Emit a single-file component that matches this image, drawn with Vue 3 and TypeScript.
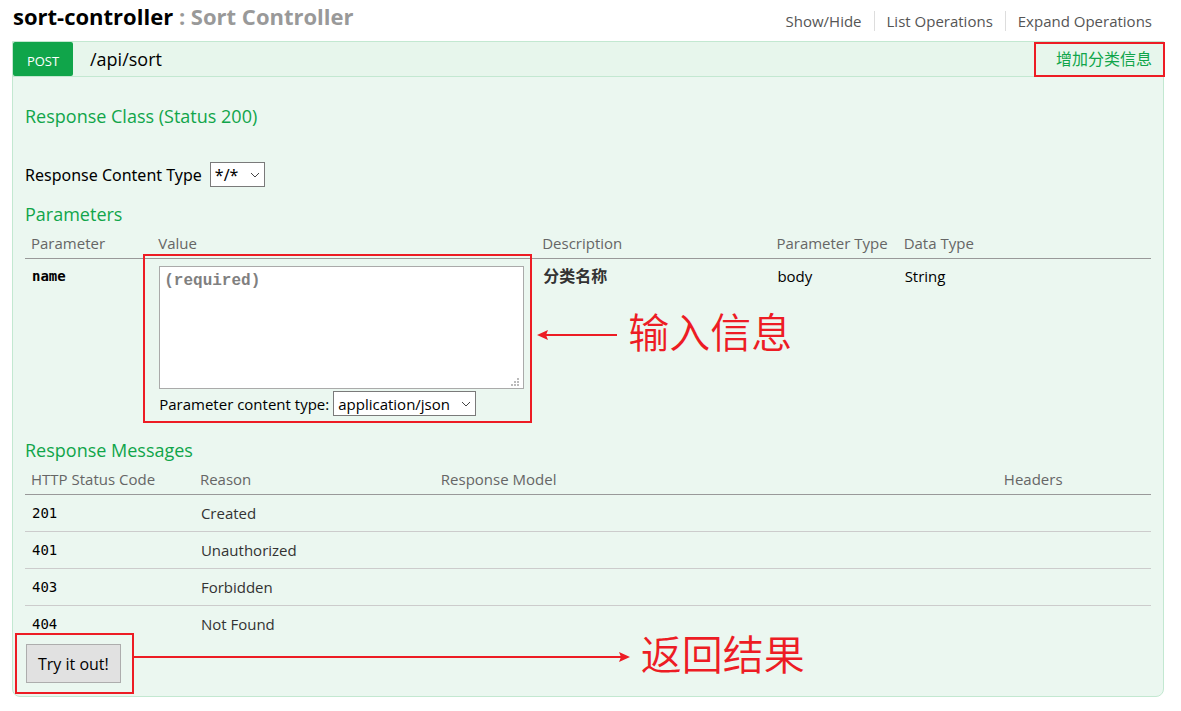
<script setup lang="ts">
import { ref } from 'vue'

interface ResponseMessage {
  code: number
  reason: string
}

const operations: string[] = ['Show/Hide', 'List Operations', 'Expand Operations']

const messages: ResponseMessage[] = [
  { code: 201, reason: 'Created' },
  { code: 401, reason: 'Unauthorized' },
  { code: 403, reason: 'Forbidden' },
  { code: 404, reason: 'Not Found' },
]

const body = ref('')
const responseType = ref('*/*')
const contentType = ref('application/json')
</script>

<template>
  <main class="page">
    <header class="resource">
      <h2 class="title">
        <a href="#sort-controller">sort-controller</a> <span>: Sort Controller</span>
      </h2>
      <ul class="options">
        <li v-for="item in operations" :key="item">
          <a href="#sort-controller">{{ item }}</a>
        </li>
      </ul>
    </header>

    <section class="operation">
      <div class="heading">
        <a class="method" href="#post">POST</a>
        <a class="path" href="#post">/api/sort</a>
        <div class="summary">
          <a href="#post">增加分类信息</a>
        </div>
      </div>

      <form class="content" @submit.prevent>
        <h4>Response Class (Status 200)</h4>

        <div class="response-type">
          <label for="response-type">Response Content Type</label>
          <span class="select">
            <select id="response-type" v-model="responseType" class="narrow">
              <option>*/*</option>
            </select>
            <svg class="chevron" viewBox="0 0 10 6" aria-hidden="true">
              <path d="M1 1l4 4 4-4" />
            </svg>
          </span>
        </div>

        <h4 class="spaced">Parameters</h4>
        <table class="parameters">
          <thead>
            <tr>
              <th class="p-name">Parameter</th>
              <th class="p-value">Value</th>
              <th class="p-desc">Description</th>
              <th class="p-type">Parameter Type</th>
              <th class="p-data">Data Type</th>
            </tr>
          </thead>
          <tbody>
            <tr>
              <td class="code required"><label for="body">name</label></td>
              <td>
                <div class="value">
                  <div class="editor">
                    <textarea id="body" v-model="body" placeholder="(required)"></textarea>
                    <svg class="grip" viewBox="0 0 8 8" aria-hidden="true">
                      <path d="M6 0h2v2H6zM3 3h2v2H3zM6 3h2v2H6zM0 6h2v2H0zM3 6h2v2H3zM6 6h2v2H6z" />
                    </svg>
                  </div>
                  <div class="body-type">
                    <label for="content-type">Parameter content type:</label>
                    <span class="select">
                      <select id="content-type" v-model="contentType" class="wide">
                        <option>application/json</option>
                      </select>
                      <svg class="chevron" viewBox="0 0 10 6" aria-hidden="true">
                        <path d="M1 1l4 4 4-4" />
                      </svg>
                    </span>
                  </div>
                  <div class="frame frame-value"></div>
                  <div class="note note-value">
                    <svg class="arrow-left" viewBox="0 0 80 12" aria-hidden="true">
                      <path class="shaft" d="M6 6h74" />
                      <path class="tip" d="M0 6l11-5-2 5 2 5z" />
                    </svg>
                    <span>输入信息</span>
                  </div>
                </div>
              </td>
              <td class="description">分类名称</td>
              <td>body</td>
              <td>String</td>
            </tr>
          </tbody>
        </table>

        <h4 class="spaced">Response Messages</h4>
        <table class="messages">
          <thead>
            <tr>
              <th class="m-code">HTTP Status Code</th>
              <th class="m-reason">Reason</th>
              <th class="m-model">Response Model</th>
              <th class="m-headers">Headers</th>
            </tr>
          </thead>
          <tbody>
            <tr v-for="message in messages" :key="message.code">
              <td class="code">{{ message.code }}</td>
              <td class="reason">{{ message.reason }}</td>
              <td></td>
              <td></td>
            </tr>
          </tbody>
        </table>

        <div class="submit">
          <button type="submit">Try it out!</button>
          <div class="frame frame-submit"></div>
          <div class="note note-submit">
            <svg class="arrow-right" viewBox="0 0 496 12" aria-hidden="true">
              <path class="shaft" d="M0 6h490" />
              <path class="tip" d="M496 6l-11-5 2 5-2 5z" />
            </svg>
            <span>返回结果</span>
          </div>
        </div>
      </form>
    </section>
  </main>
</template>

<style>
body {
  margin: 0;
  background: #fff;
}
</style>

<style scoped>
* {
  box-sizing: border-box;
}

.page {
  padding: 0 17px 14px 12px;
  font-family: 'Open Sans', 'Noto Sans CJK SC', sans-serif;
  font-size: 15px;
  line-height: 20px;
  color: #000;
}

a {
  color: inherit;
  text-decoration: none;
}

.resource {
  display: flex;
  justify-content: space-between;
  align-items: center;
  height: 41px;
}

.title {
  margin: 0 0 10px 1px;
  font-size: 22px;
  line-height: 30px;
  font-weight: 700;
}

.title span {
  color: #999;
}

.options {
  display: flex;
  margin: 0;
  padding: 0;
  list-style: none;
  color: #555;
}

.options li {
  padding: 0 12px;
}

.options li + li {
  border-left: 1px solid #ddd;
}

.operation {
  border: 1px solid #c3e8d1;
  border-radius: 0 0 8px 8px;
  background: #ebf7f0;
}

.heading {
  display: flex;
  align-items: center;
  height: 35px;
  border-bottom: 1px solid #c3e8d1;
  background: #e7f6ec;
}

.method {
  width: 60px;
  height: 34px;
  padding-top: 3px;
  border-radius: 2px;
  background: #10a54a;
  color: #fff;
  font-size: 13px;
  line-height: 32px;
  text-align: center;
}

.path {
  margin-left: 17px;
  font-size: 18px;
}

.summary {
  align-self: flex-start;
  height: 35px;
  margin: 0 -2px 0 auto;
  padding: 0 11px 0 20px;
  border: 2px solid #ed1c24;
  color: #10a54a;
  font-size: 16px;
  line-height: 31px;
}

.content {
  padding: 27px 12px 13px;
}

h4 {
  margin: 0;
  color: #10a54a;
  font-size: 18px;
  line-height: 24px;
  font-weight: 400;
}

.spaced {
  margin-top: 15px;
}

.response-type,
.body-type {
  display: flex;
  align-items: center;
  gap: 4px;
}

.response-type {
  gap: 8px;
  margin-top: 34px;
  font-family: 'Noto Sans', sans-serif;
  font-size: 16px;
}

.body-type {
  margin-top: 2px;
}

.select {
  position: relative;
  display: flex;
}

select {
  appearance: none;
  height: 25px;
  margin: 0;
  padding: 0 5px 0 4px;
  border: 1px solid #7a7a7a;
  border-radius: 0;
  background: #fff;
  color: #000;
  font: inherit;
}

.narrow {
  width: 55px;
}

.wide {
  width: 143px;
}

.chevron {
  position: absolute;
  top: 10px;
  right: 5px;
  width: 10px;
  height: 6px;
  fill: none;
  stroke: #444;
  pointer-events: none;
}

table {
  width: 100%;
  table-layout: fixed;
  border-spacing: 0;
}

th {
  padding: 7px 0 5px 6px;
  border-bottom: 1px solid #999;
  color: #666;
  font-weight: 400;
  text-align: left;
  white-space: nowrap;
}

td {
  padding: 7px 0 7px 7px;
  vertical-align: top;
}

.p-name,
.p-type {
  width: 11.3%;
}

.p-value {
  width: 34.1%;
}

.p-desc {
  width: 20.8%;
}

.m-code {
  width: 15%;
}

.m-reason {
  width: 21.4%;
}

.m-model {
  width: 50%;
}

.code {
  font-family: 'DejaVu Sans Mono', monospace;
  font-size: 14px;
}

.required,
.description {
  font-weight: 700;
}

.description {
  color: #333;
  font-size: 16px;
}

.value {
  position: relative;
  margin-right: 12px;
}

.editor {
  position: relative;
}

textarea {
  display: block;
  width: 100%;
  height: 123px;
  margin: 0;
  padding: 4px;
  border: 1px solid #aaa;
  border-radius: 0;
  background: #fff;
  resize: none;
  font: 700 16px/20px 'Liberation Mono', monospace;
}

textarea::placeholder {
  color: #808080;
  opacity: 1;
}

.grip {
  position: absolute;
  right: 5px;
  bottom: 3px;
  width: 8px;
  height: 8px;
  fill: #bbb;
}

.messages td {
  padding: 8px 0 8px 7px;
}

.messages tr + tr td {
  border-top: 1px solid #ccc;
}

.reason {
  color: #333;
}

.submit {
  position: relative;
  width: max-content;
  margin-top: 2px;
}

button {
  display: block;
  height: 39px;
  margin-left: 1px;
  padding: 0 11px;
  border: 1px solid #adadad;
  border-radius: 0;
  background: #e1e1e1;
  color: #000;
  font: inherit;
  font-size: 16px;
}

.frame {
  position: absolute;
  border: 2px solid #ed1c24;
  pointer-events: none;
}

.frame-value {
  inset: -12px -8px -7px -16px;
}

.frame-submit {
  inset: -11px -13px -11px -10px;
}

.note {
  position: absolute;
  display: flex;
  align-items: center;
  gap: 11px;
  color: #ed1c24;
  font-size: 41px;
  line-height: 48px;
  white-space: nowrap;
  font-family: 'Noto Sans CJK SC', sans-serif;
  font-weight: 350;
}

.note span {
  padding-bottom: 10px;
}

.note svg {
  flex: none;
}

.note-value {
  top: 40px;
  left: calc(100% + 13px);
}

.note-submit {
  top: -16px;
  left: calc(100% + 13px);
}

.arrow-left {
  width: 80px;
  height: 12px;
}

.arrow-right {
  width: 496px;
  height: 12px;
}

.shaft {
  fill: none;
  stroke: #ed1c24;
  stroke-width: 2;
}

.tip {
  fill: #ed1c24;
}
</style>
